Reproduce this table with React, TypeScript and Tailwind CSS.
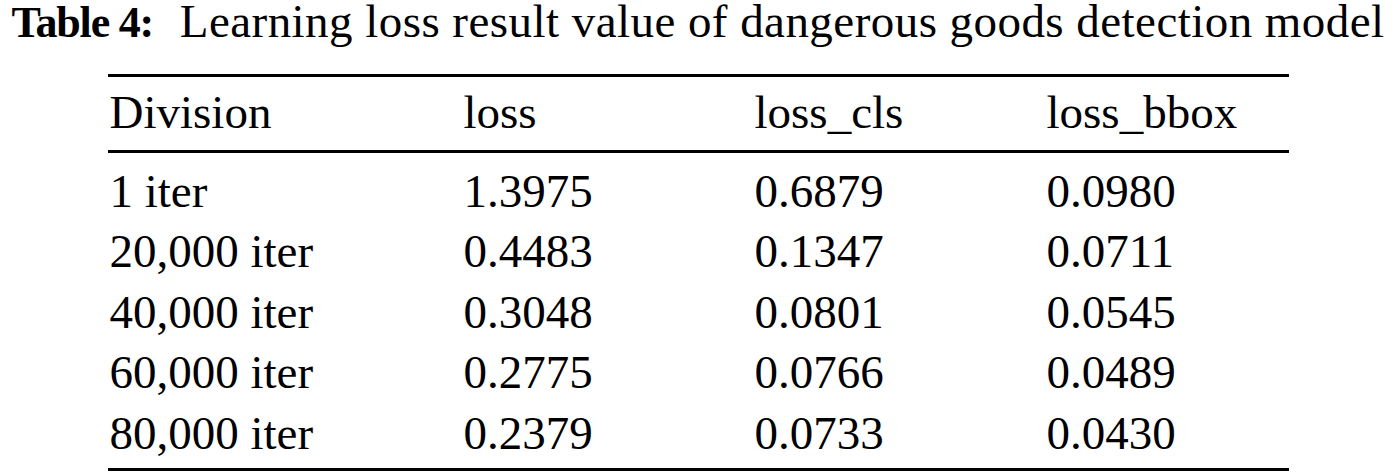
const rows = [
  ["1 iter", "1.3975", "0.6879", "0.0980"],
  ["20,000 iter", "0.4483", "0.1347", "0.0711"],
  ["40,000 iter", "0.3048", "0.0801", "0.0545"],
  ["60,000 iter", "0.2775", "0.0766", "0.0489"],
  ["80,000 iter", "0.2379", "0.0733", "0.0430"],
];

const cols = "grid grid-cols-[356px_291px_292px_242px]";

export default function App() {
  return (
    <div className="w-[1396px] h-[475px] bg-white text-black font-['Liberation_Serif','Times_New_Roman',serif] flex flex-col items-center">
      <p className="text-[47px] leading-[42px] whitespace-nowrap">
        <span className="font-bold text-[44px] tracking-[-1.2px]">Table 4:</span>{" "}
        <span className="ml-[15px] tracking-[0.45px]">
          Learning loss result value of dangerous goods detection model
        </span>
      </p>
      <div className="mt-[30px] w-[1181px] border-t-[3px] border-b-[3px] border-black">
        <div className={`${cols} pt-[5px] pb-[7px] border-b-[3px] border-black text-[47px] leading-[60.5px]`}>
          <div className="pl-[2px]">Division</div>
          <div>loss</div>
          <div>loss_cls</div>
          <div>loss_bbox</div>
        </div>
        <div className="pt-[8px] pb-[5px]">
          {rows.map((r) => (
            <div key={r[0]} className={`${cols} text-[47px] leading-[60.5px]`}>
              <div className="pl-[2px]">{r[0]}</div>
              <div>{r[1]}</div>
              <div>{r[2]}</div>
              <div>{r[3]}</div>
            </div>
          ))}
        </div>
      </div>
    </div>
  );
}
